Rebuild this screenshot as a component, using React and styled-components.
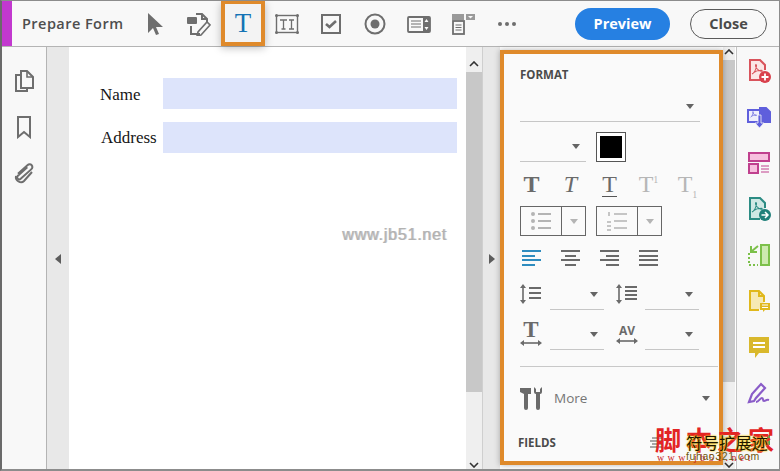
import styled, { createGlobalStyle } from "styled-components";

const GlobalStyle = createGlobalStyle`
  html, body {
    margin: 0;
    padding: 0;
    background: #fff;
  }
`

const Frame = styled.div`
  position: relative;
  width: 780px;
  height: 471px;
  box-sizing: border-box;
  overflow: hidden;
  display: flex;
  flex-direction: column;
  border-top: 1px solid #8c8c8c;
  border-left: 2px solid #6a6a6a;
  border-right: 1px solid #8c8c8c;
  border-bottom: 2px solid #8c8c8c;
  background: #fff;
  font-family: "Open Sans", "Liberation Sans", sans-serif;
`

const Toolbar = styled.div`
  height: 45px;
  flex: none;
  display: flex;
  align-items: center;
  background: #f8f8f8;
  border-bottom: 1px solid #b4b4b4;
`

const Accent = styled.div`
  width: 10px;
  height: 45px;
  background: #c238cf;
`

const Title = styled.div`
  width: 121px;
  padding-left: 10px;
  box-sizing: border-box;
  font-size: 14.5px;
  letter-spacing: 0.45px;
  font-weight: 600;
  color: #4e4e4e;
`

const ToolButton = styled.div`
  width: 44px;
  height: 45px;
  flex: none;
  box-sizing: border-box;
  display: flex;
  align-items: center;
  justify-content: center;
  color: #6e6e6e;
  ${(p) => p.$active && `
    border: 4px solid #df8a2b;
    border-top-width: 3px;
    background: #f3f3f3;
    box-shadow: 0 2px 8px rgba(0, 0, 0, 0.25);
    color: #1473b5;
    z-index: 2;
  `}
`

const BlueT = styled.span`
  font-family: "Liberation Serif", serif;
  font-size: 27px;
  line-height: 1;
  color: #1473b5;
`

const ToolbarSpacer = styled.div`
  flex: 1;
`

const PreviewButton = styled.div`
  width: 95px;
  height: 32px;
  border-radius: 16px;
  background: #2680e2;
  color: #fff;
  font-size: 14.5px;
  font-weight: 700;
  display: flex;
  align-items: center;
  justify-content: center;
  margin-right: 20px;
`

const CloseButton = styled.div`
  width: 77px;
  height: 30px;
  box-sizing: border-box;
  border-radius: 15px;
  border: 1px solid #5a5a5a;
  color: #4a4a4a;
  font-size: 14.5px;
  font-weight: 700;
  display: flex;
  align-items: center;
  justify-content: center;
  margin-right: 12px;
`

const Body = styled.div`
  flex: 1;
  min-height: 0;
  display: flex;
`

const LeftRail = styled.div`
  width: 45px;
  flex: none;
  box-sizing: border-box;
  background: #f8f8f8;
  border-right: 1px solid #b4b4b4;
  padding-top: 22px;
  display: flex;
  flex-direction: column;
  align-items: center;
  gap: 22px;
  color: #6e6e6e;
`

const Gutter = styled.div`
  width: ${(p) => p.$w}px;
  flex: none;
  background: #e8e8e8;
  display: flex;
  align-items: center;
  justify-content: center;
  padding-top: 2px;
  box-sizing: border-box;
  border-left: ${(p) => p.$line ? "1px solid #cfcfcf" : "none"};
`

const Arrow = styled.div`
  width: 0;
  height: 0;
  border-top: 5px solid transparent;
  border-bottom: 5px solid transparent;
  ${(p) => p.$dir === "left"
    ? "border-right: 6px solid #5c5c5c;"
    : "border-left: 6px solid #5c5c5c;"}
`

const Page = styled.div`
  width: 397px;
  flex: none;
  background: #fff;
  padding: 31px 9px 0 31px;
  box-sizing: border-box;
  display: flex;
  flex-direction: column;
  gap: 13px;
`

const FormRow = styled.div`
  display: flex;
  align-items: center;
  height: 31px;
`

const FieldLabel = styled.div`
  width: 63px;
  padding-left: ${(p) => p.$indent}px;
  padding-top: ${(p) => p.$drop || 0}px;
  box-sizing: border-box;
  font-family: "Liberation Serif", serif;
  font-size: 17px;
  color: #161616;
`

const FieldInput = styled.div`
  flex: 1;
  height: 100%;
  background: #dde4fb;
`

const Scrollbar = styled.div`
  width: ${(p) => p.$w}px;
  flex: none;
  background: #efefef;
  display: flex;
  flex-direction: column;
  align-items: center;
`

const ScrollCap = styled.div`
  height: ${(p) => p.$h}px;
  flex: none;
  width: 100%;
  box-sizing: border-box;
  padding-bottom: 5px;
  display: flex;
  align-items: flex-end;
  justify-content: center;
  color: #333;
`

const ScrollEnd = styled.div`
  margin-top: auto;
  padding-bottom: 1px;
  color: #333;
  line-height: 0;
`

const ScrollThumb = styled.div`
  width: 100%;
  height: ${(p) => p.$h}px;
  flex: none;
  background: #c8c8c8;
`

const FormatPanel = styled.div`
  width: 223px;
  flex: none;
  box-sizing: border-box;
  margin: 3px 0 4px;
  border: 4px solid #df8a2b;
  background: #fafafa;
  box-shadow: 0 0 6px rgba(0, 0, 0, 0.3);
  padding: 13px 0 0 16px;
  overflow: hidden;
  z-index: 2;
`

const SectionTitle = styled.div`
  font-size: 11.5px;
  line-height: 16px;
  font-weight: 700;
  color: #4b4b4b;
`

const Select = styled.div`
  width: ${(p) => p.$w}px;
  height: ${(p) => p.$h || 30}px;
  flex: none;
  box-sizing: border-box;
  margin-left: ${(p) => p.$gap || 0}px;
  border-bottom: 1px solid #c6c6c6;
  display: flex;
  align-items: flex-end;
  justify-content: flex-end;
  padding: 0 6px 12px 0;
`

const Caret = styled.div`
  width: 0;
  height: 0;
  border-left: 4px solid transparent;
  border-right: 4px solid transparent;
  border-top: 5px solid ${(p) => p.$light ? "#b4b4b4" : "#646464"};
`

const SizeRow = styled.div`
  display: flex;
  align-items: flex-end;
  gap: 10px;
  height: 40px;
`

const Swatch = styled.div`
  width: 30px;
  height: 30px;
  box-sizing: border-box;
  border: 1px solid #555;
  padding: 3px;
  background: #fff;

  & div {
    width: 100%;
    height: 100%;
    background: #000;
  }
`

const IconRow = styled.div`
  display: flex;
  height: 40px;
  margin-top: ${(p) => p.$top}px;
  align-items: center;
`

const StyleIcon = styled.div`
  width: 39px;
  flex: none;
  margin-left: ${(p) => p.$shift || 0}px;
  display: flex;
  justify-content: center;
  align-items: center;
  color: #6a6a6a;
`

const GlyphT = styled.span`
  font-family: "Liberation Serif", serif;
  font-size: 24px;
  line-height: 24px;
  font-weight: ${(p) => p.$bold ? 700 : 400};
  font-style: ${(p) => p.$italic ? "italic" : "normal"};
  color: ${(p) => p.$dim ? "#b6b6b6" : "#6a6a6a"};
  border-bottom: ${(p) => p.$under ? "1px solid #555" : "none"};
  & sup, & sub {
    font-size: 10px;
    line-height: 0;
  }
`

const ListRow = styled.div`
  display: flex;
  gap: 10px;
  margin-top: 2px;
`

const SplitButton = styled.div`
  width: 66px;
  height: 30px;
  box-sizing: border-box;
  border: 1px solid #666;
  display: flex;
`

const SplitMain = styled.div`
  width: 41px;
  box-sizing: border-box;
  border-right: 1px solid #666;
  display: flex;
  align-items: center;
  justify-content: center;
`

const SplitSide = styled.div`
  flex: 1;
  display: flex;
  align-items: center;
  justify-content: center;
`

const SpacingRow = styled.div`
  display: flex;
  align-items: flex-end;
  height: 30px;
  margin-top: ${(p) => p.$top}px;
`

const SpacingIcon = styled.div`
  width: 30px;
  flex: none;
  height: 30px;
  padding-bottom: 2px;
  box-sizing: border-box;
  display: flex;
  flex-direction: column;
  align-items: center;
  justify-content: center;
  margin-left: ${(p) => p.$left || 0}px;
  color: #6a6a6a;
`

const TrackLabel = styled.span`
  font-family: ${(p) => p.$serif ? '"Liberation Serif", serif' : '"Open Sans", sans-serif'};
  font-weight: 700;
  font-size: ${(p) => p.$serif ? 23 : 12}px;
  line-height: ${(p) => p.$serif ? 18 : 13}px;
  color: #6a6a6a;
`

const Divider = styled.div`
  width: 198px;
  height: 1px;
  background: #c8c8c8;
  margin-top: 16px;
`

const MoreRow = styled.div`
  display: flex;
  align-items: center;
  height: 30px;
  width: 190px;
  margin-top: 16px;
`

const MoreText = styled.span`
  flex: 1;
  margin-left: 10px;
  font-size: 13.5px;
  color: #757575;
`

const FieldsRow = styled.div`
  display: flex;
  align-items: center;
  justify-content: space-between;
  width: 146px;
  margin-top: 22px;
  margin-left: -2px;
`

const RightRail = styled.div`
  flex: 1;
  box-sizing: border-box;
  background: #f8f8f8;
  border-left: 1px solid #c4c4c4;
  padding: 12px 0 0 2px;
  display: flex;
  flex-direction: column;
  align-items: center;
  gap: 22px;
  margin-left: 1px;
`

const Watermark = styled.div`
  position: absolute;
  left: 340px;
  top: 224px;
  font-family: "Liberation Sans", sans-serif;
  font-size: 16.2px;
  letter-spacing: 0.7px;
  color: #b2b2b2;
  text-shadow: 1px 0 0 #c8c8c8;
`

const StampMain = styled.div`
  position: absolute;
  left: 653px;
  top: 423px;
  font-family: "Noto Sans CJK SC", serif;
  font-size: 26px;
  font-weight: 700;
  line-height: 30px;
  letter-spacing: 5px;
  color: #e32424;
  white-space: nowrap;
  z-index: 3;
`

const StampSub = styled.div`
  position: absolute;
  left: 684px;
  top: 431px;
  font-family: "Noto Sans CJK SC", serif;
  font-size: 16.4px;
  line-height: 20px;
  color: #1c1400;
  text-shadow: 0 0 2px #f5cf2c, 0 0 2px #f5cf2c, 0 0 1px #f5cf2c;
  white-space: nowrap;
  z-index: 4;
`

const StampUrl = styled.div`
  position: absolute;
  left: 655px;
  top: 451px;
  font-family: "Liberation Serif", serif;
  font-size: 10px;
  line-height: 12px;
  letter-spacing: 3.4px;
  color: #c92222;
  white-space: nowrap;
  z-index: 3;
`

const StampUrlTop = styled.div`
  position: absolute;
  left: 684px;
  top: 449px;
  font-family: "Liberation Sans", sans-serif;
  font-size: 10.5px;
  line-height: 12px;
  letter-spacing: 0.6px;
  color: #6b5a10;
  white-space: nowrap;
  z-index: 4;
`

function Icon({ size = 24, children, ...rest }) {
  return (
    <svg width={size} height={size} viewBox="0 0 24 24" fill="none" stroke="currentColor" strokeWidth="2" {...rest}>
      {children}
    </svg>
  )
}

const pdfMark = "M6 17c2-1 4-5 4.500-8 .2-1.500-.8-2-1-.8-.3 2 2.500 5.500 5.500 6 1.300.2 1.500-1 .3-1-2.500 0-6 1-8 2.500"

function Chevron({ up }) {
  return (
    <svg width="10" height="6" viewBox="0 0 10 6" fill="none" stroke="currentColor" strokeWidth="1.600">
      <path d={up ? "M1 5l4-4 4 4" : "M1 1l4 4 4-4"} />
    </svg>
  )
}

function RailIcons() {
  return (
    <>
      <Icon style={{ color: "#d9545c" }}>
        <path d="M14 21H3V1h10l5 5v5" fill="#fbe6e6" />
        <path d={pdfMark} strokeWidth="1.100" transform="translate(-1 -2)" />
        <circle cx="18" cy="18" r="6" fill="#d9404c" stroke="none" />
        <path d="M18 14.500v7M14.500 18h7" stroke="#fff" strokeWidth="1.800" />
      </Icon>
      <Icon style={{ color: "#5f5fdc" }}>
        <path d="M1 5h12v12H1z" fill="#eeeefc" />
        <path d={pdfMark} strokeWidth="1.100" transform="translate(0 2) scale(.6)" />
        <path d="M13 3h6l4 4v10H13z" fill="#5f5fdc" />
        <path d="M11 10h3v8h3l-4.500 5L8 18h3z" fill="#5f5fdc" stroke="#f8f8f8" strokeWidth=".8" />
      </Icon>
      <Icon style={{ color: "#c0408e" }}>
        <rect x="2" y="2" width="20" height="8" fill="#f7c0de" />
        <rect x="2" y="13" width="9" height="9" fill="#f7c0de" />
        <path d="M14 15h8M14 18h8M14 21h8" strokeWidth="1" />
      </Icon>
      <Icon style={{ color: "#2c8c84" }}>
        <path d="M13 22H3V1h10l5 5v5" fill="#cfe8e4" />
        <path d={pdfMark} strokeWidth="1.100" transform="translate(-1 -2)" />
        <circle cx="18" cy="18" r="6" fill="#20807a" stroke="none" />
        <path d="M14.500 18h6M18 15l3 3-3 3" stroke="#fff" strokeWidth="1.500" />
      </Icon>
      <Icon style={{ color: "#7cc04a" }}>
        <rect x="14" y="2" width="8" height="20" fill="#cdeab0" />
        <path d="M2 10v12h9" strokeDasharray="2 2" />
        <path d="M11 3L5 8M4 3v6h6" strokeWidth="2" />
      </Icon>
      <Icon style={{ color: "#e0b81c" }}>
        <path d="M12 21H3V2h9l5 5v6" fill="#f6e9b4" />
        <path d="M12 2v5h5" />
        <path d="M13 14h10v7h-5l-2 2v-2h-3z" fill="#e0b81c" stroke="none" />
        <path d="M15 16h6M15 18.500h6" stroke="#fff" strokeWidth="1" />
      </Icon>
      <Icon style={{ color: "#d9b82c" }}>
        <path d="M2 2h20v16H12l-4 5v-5H2z" fill="#d9b82c" stroke="none" />
        <path d="M6 8h12M6 12h12" stroke="#fff" />
      </Icon>
      <Icon style={{ color: "#8a5cc8" }}>
        <path d="M2 21L5 13 14 3l4 4-9 10-2 3z" strokeWidth="2.200" />
        <path d="M9 21c3 0 4-4 6-4s0 3 2 3 2-2 5-1" strokeWidth="2" />
      </Icon>
      <Icon style={{ color: "#4cab52" }}>
        <path d="M20 8h3v10h-3z" fill="#4cab52" stroke="none" />
      </Icon>
    </>
  )
}

export default function App() {
  return (
    <Frame>
      <GlobalStyle />
      <Toolbar>
        <Accent />
        <Title>Prepare Form</Title>
        <ToolButton>
          <svg width="20" height="24" viewBox="0 0 20 24" fill="currentColor">
            <path d="M3 1v20l5-5 3 7 3-1-3-7h7z" />
          </svg>
        </ToolButton>
        <ToolButton>
          <Icon>
            <path d="M9 2h6l5 5v3M15 2v5h5M4 14v8h9" />
            <rect x="0" y="5" width="10" height="7" fill="currentColor" stroke="none" rx="1" />
            <path d="M23 13L14 23l-4 1 1-4 9-10z" strokeWidth="1.600" />
          </Icon>
        </ToolButton>
        <ToolButton $active>
          <BlueT>T</BlueT>
        </ToolButton>
        <ToolButton>
          <svg width="24" height="24" viewBox="0 0 24 24" fill="none" stroke="currentColor">
            <rect x="1.500" y="3.500" width="21" height="17" strokeWidth="1.400" />
            <path d="M5 8h7M8.500 8v9M6.500 17h4M14 8h5M16.500 8v9M14 17h5" strokeWidth="1.300" />
            <g fill="currentColor" stroke="none">
              <circle cx="1.500" cy="3.500" r="1.500" />
              <circle cx="22.500" cy="3.500" r="1.500" />
              <circle cx="1.500" cy="20.500" r="1.500" />
              <circle cx="22.500" cy="20.500" r="1.500" />
            </g>
          </svg>
        </ToolButton>
        <ToolButton>
          <Icon>
            <rect x="3" y="3" width="18" height="18" />
            <path d="M7 12l3.500 3L17 9" strokeWidth="2.600" />
          </Icon>
        </ToolButton>
        <ToolButton>
          <Icon>
            <circle cx="12" cy="12" r="9.500" />
            <circle cx="12" cy="12" r="4.500" fill="currentColor" stroke="none" />
          </Icon>
        </ToolButton>
        <ToolButton>
          <Icon>
            <rect x="1" y="5" width="22" height="15" rx="1" strokeWidth="1.800" />
            <path d="M4 9h10M4 12h10M4 15h10" strokeWidth="1.200" />
            <path d="M16 5h7v15h-7z" fill="currentColor" stroke="none" />
            <path d="M19.500 7l2 3h-4zM19.500 18l2-3h-4z" fill="#f8f8f8" stroke="none" />
          </Icon>
        </ToolButton>
        <ToolButton>
          <Icon>
            <path d="M1 2h12v6H1zM15 2h9v6h-9z" fill="#9a9a9a" stroke="none" />
            <path d="M17 4h5l-2.500 2.500z" fill="#f8f8f8" stroke="none" />
            <rect x="2" y="9" width="11" height="13" strokeWidth="1.800" />
            <path d="M4.500 13h6M4.500 15.500h6M4.500 18h6" strokeWidth="1" />
          </Icon>
        </ToolButton>
        <ToolButton>
          <svg width="20" height="6" viewBox="0 0 20 6" fill="currentColor">
            <circle cx="3" cy="3" r="2" />
            <circle cx="10" cy="3" r="2" />
            <circle cx="17" cy="3" r="2" />
          </svg>
        </ToolButton>
        <ToolbarSpacer />
        <PreviewButton>Preview</PreviewButton>
        <CloseButton>Close</CloseButton>
      </Toolbar>
      <Body>
        <LeftRail>
          <Icon>
            <path d="M9 2h6l6 6v11H9z" />
            <path d="M15 2v6h6" strokeWidth="1.600" />
            <path d="M9 6H4v16h11v-3" />
          </Icon>
          <Icon>
            <path d="M6 2h12v20l-6-5-6 5z" />
          </Icon>
          <Icon>
            <path d="M6 13L15 4c3-3 7 1 4 4L9 18c-2 2-5-1-3-3l9-9" transform="rotate(3 12 12)" />
            <path d="M20 11l-8 9c-3 3-9 0-8-5" />
          </Icon>
        </LeftRail>
        <Gutter $w={22}>
          <Arrow $dir="left" />
        </Gutter>
        <Page>
          <FormRow>
            <FieldLabel $indent={0} $drop={2}>Name</FieldLabel>
            <FieldInput />
          </FormRow>
          <FormRow>
            <FieldLabel $indent={1}>Address</FieldLabel>
            <FieldInput />
          </FormRow>
        </Page>
        <Scrollbar $w={16}>
          <ScrollCap $h={25}>
            <Chevron up />
          </ScrollCap>
          <ScrollThumb $h={320} />
          <ScrollEnd>
            <Chevron />
          </ScrollEnd>
        </Scrollbar>
        <Gutter $w={18} $line>
          <Arrow $dir="right" />
        </Gutter>
        <FormatPanel>
          <SectionTitle>FORMAT</SectionTitle>
          <Select $w={180} $h={39}>
            <Caret />
          </Select>
          <SizeRow>
            <Select $w={66}>
              <Caret />
            </Select>
            <Swatch>
              <div />
            </Swatch>
          </SizeRow>
          <IconRow $top={2}>
            <StyleIcon $shift={-8}>
              <GlyphT $bold>T</GlyphT>
            </StyleIcon>
            <StyleIcon>
              <GlyphT $italic>T</GlyphT>
            </StyleIcon>
            <StyleIcon>
              <GlyphT $under>T</GlyphT>
            </StyleIcon>
            <StyleIcon>
              <GlyphT $dim>T<sup>1</sup></GlyphT>
            </StyleIcon>
            <StyleIcon>
              <GlyphT $dim>T<sub>1</sub></GlyphT>
            </StyleIcon>
          </IconRow>
          <ListRow>
            <SplitButton>
              <SplitMain>
                <svg width="22" height="20" viewBox="0 0 22 20" stroke="#b4b4b4" strokeWidth="2" fill="#b4b4b4">
                  <circle cx="3" cy="3" r="1" />
                  <circle cx="3" cy="10" r="1" />
                  <circle cx="3" cy="17" r="1" />
                  <path d="M8 3h13M8 10h13M8 17h13" />
                </svg>
              </SplitMain>
              <SplitSide>
                <Caret $light />
              </SplitSide>
            </SplitButton>
            <SplitButton>
              <SplitMain>
                <svg width="22" height="20" viewBox="0 0 22 20" stroke="#b4b4b4" strokeWidth="1.500" fill="none">
                  <path d="M3 1v4M1 11h4M1 15h4M1 19h4M8 3h13M8 10h13M8 17h13" />
                </svg>
              </SplitMain>
              <SplitSide>
                <Caret $light />
              </SplitSide>
            </SplitButton>
          </ListRow>
          <IconRow $top={2}>
            <StyleIcon $shift={-8}>
              <svg width="20" height="16" viewBox="0 0 20 16" stroke="#2f8cbf" strokeWidth="2">
                <path d="M0 1h19M0 6h13M0 10h19M0 15h13" />
              </svg>
            </StyleIcon>
            <StyleIcon>
              <svg width="20" height="16" viewBox="0 0 20 16" stroke="#6a6a6a" strokeWidth="2">
                <path d="M0 1h19M4 6h11M0 10h19M4 15h11" />
              </svg>
            </StyleIcon>
            <StyleIcon>
              <svg width="20" height="16" viewBox="0 0 20 16" stroke="#6a6a6a" strokeWidth="2">
                <path d="M0 1h19M6 6h13M0 10h19M6 15h13" />
              </svg>
            </StyleIcon>
            <StyleIcon>
              <svg width="20" height="16" viewBox="0 0 20 16" stroke="#6a6a6a" strokeWidth="2">
                <path d="M0 1h19M0 6h19M0 10h19M0 15h19" />
              </svg>
            </StyleIcon>
          </IconRow>
          <SpacingRow $top={2}>
            <SpacingIcon $left={-4}>
              <svg width="22" height="20" viewBox="0 0 22 20" stroke="#6a6a6a" fill="#6a6a6a" strokeWidth="1.600">
                <path d="M3 2v16" />
                <path d="M0 4l3-4 3 4zM0 16l3 4 3-4z" stroke="none" />
                <path d="M9 4h12M9 9h12M9 14h12" strokeWidth="2" />
              </svg>
            </SpacingIcon>
            <Select $w={54} $gap={4}>
              <Caret />
            </Select>
            <SpacingIcon $left={8}>
              <svg width="22" height="20" viewBox="0 0 22 20" stroke="#6a6a6a" fill="#6a6a6a" strokeWidth="1.600">
                <path d="M3 2v16" />
                <path d="M0 4l3-4 3 4zM0 16l3 4 3-4z" stroke="none" />
                <path d="M9 3h12M9 7h12M9 11h12M9 15h12" strokeWidth="2" />
              </svg>
            </SpacingIcon>
            <Select $w={54} $gap={3}>
              <Caret />
            </Select>
          </SpacingRow>
          <SpacingRow $top={10}>
            <SpacingIcon $left={-4}>
              <TrackLabel $serif>T</TrackLabel>
              <svg width="22" height="8" viewBox="0 0 22 8" stroke="#6a6a6a" fill="#6a6a6a" strokeWidth="1.600">
                <path d="M2 4h18" />
                <path d="M0 4l4-3v6zM22 4l-4-3v6z" stroke="none" />
              </svg>
            </SpacingIcon>
            <Select $w={54} $gap={4}>
              <Caret />
            </Select>
            <SpacingIcon $left={8}>
              <TrackLabel>AV</TrackLabel>
              <svg width="22" height="8" viewBox="0 0 22 8" stroke="#6a6a6a" fill="#6a6a6a" strokeWidth="1.600">
                <path d="M2 4h18" />
                <path d="M0 4l4-3v6zM22 4l-4-3v6z" stroke="none" />
              </svg>
            </SpacingIcon>
            <Select $w={54} $gap={3}>
              <Caret />
            </Select>
          </SpacingRow>
          <Divider />
          <MoreRow>
            <svg width="24" height="24" viewBox="0 0 24 24" fill="#6a6a6a">
              <path d="M0 2h11v6H8v14a2 2 0 0 1-4 0V8L0 6z" />
              <path d="M14 1v5a2 2 0 0 0 2 2v14a2 2 0 0 0 4 0V8a2 2 0 0 0 2-2V1l-2 2v3h-4V3z" />
            </svg>
            <MoreText>More</MoreText>
            <Caret />
          </MoreRow>
          <FieldsRow>
            <SectionTitle>FIELDS</SectionTitle>
            <svg width="14" height="12" viewBox="0 0 14 12" stroke="#555" strokeWidth="1.200">
              <path d="M2 1h11M0 4h13M2 7h11M0 10h13" />
            </svg>
          </FieldsRow>
        </FormatPanel>
        <Scrollbar $w={12}>
          <ScrollCap $h={13}>
            <Chevron up />
          </ScrollCap>
          <ScrollThumb $h={322} />
          <ScrollEnd>
            <Chevron />
          </ScrollEnd>
        </Scrollbar>
        <RightRail>
          <RailIcons />
        </RightRail>
      </Body>
      <Watermark>www.jb51.net</Watermark>
      <StampMain>脚本之家</StampMain>
      <StampSub>符号扩展迹</StampSub>
      <StampUrl>www.jb51.net</StampUrl>
      <StampUrlTop>fuhao321.com</StampUrlTop>
    </Frame>
  )
}
